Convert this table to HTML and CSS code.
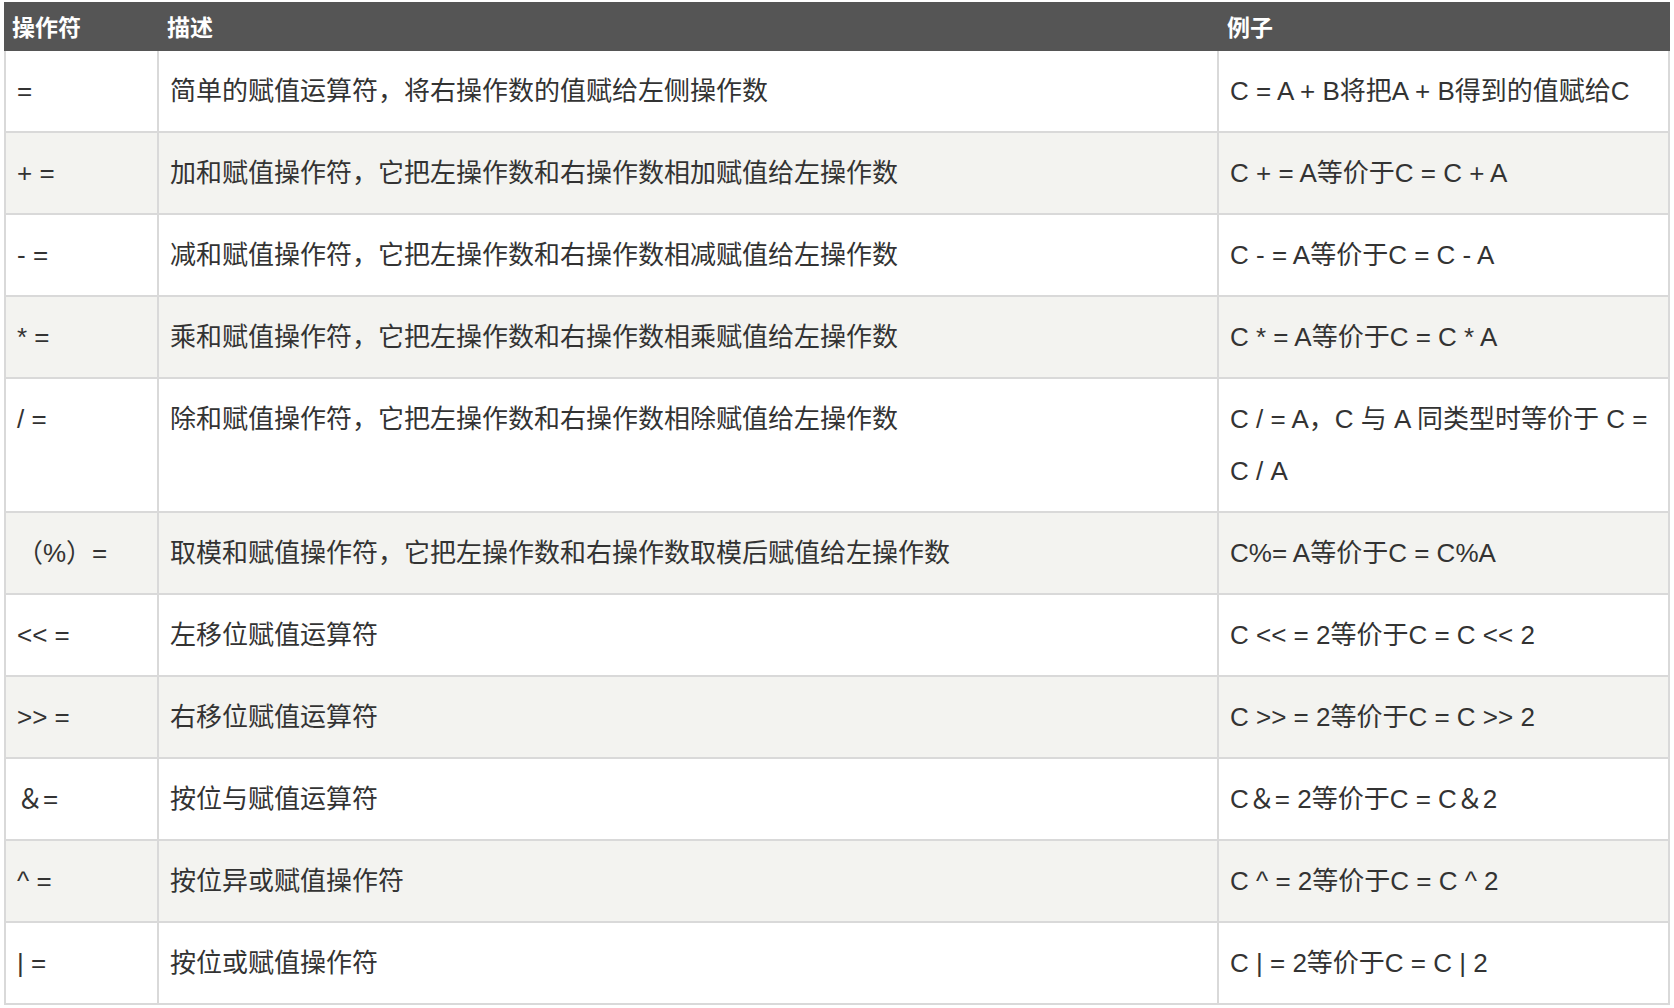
FILE: index.html
```html
<!DOCTYPE html>
<html lang="zh-CN">
<head>
<meta charset="utf-8">
<title>赋值运算符</title>
<link rel="stylesheet" href="styles.css">
</head>
<body>
<table class="ops">
  <colgroup>
    <col class="c-op">
    <col class="c-desc">
    <col class="c-ex">
  </colgroup>
  <thead>
    <tr><th>操作符</th><th>描述</th><th>例子</th></tr>
  </thead>
  <tbody>
    <tr><td>=</td><td>简单的赋值运算符，将右操作数的值赋给左侧操作数</td><td class="nowrap">C = A + B将把A + B得到的值赋给C</td></tr>
    <tr><td>+ =</td><td>加和赋值操作符，它把左操作数和右操作数相加赋值给左操作数</td><td>C + = A等价于C = C + A</td></tr>
    <tr><td>- =</td><td>减和赋值操作符，它把左操作数和右操作数相减赋值给左操作数</td><td>C - = A等价于C = C - A</td></tr>
    <tr><td>* =</td><td>乘和赋值操作符，它把左操作数和右操作数相乘赋值给左操作数</td><td>C * = A等价于C = C * A</td></tr>
    <tr><td>/ =</td><td>除和赋值操作符，它把左操作数和右操作数相除赋值给左操作数</td><td>C / = A，C 与 A 同类型时等价于 C = C&nbsp;/&nbsp;A</td></tr>
    <tr><td>（%）=</td><td>取模和赋值操作符，它把左操作数和右操作数取模后赋值给左操作数</td><td>C%= A等价于C = C%A</td></tr>
    <tr><td>&lt;&lt; =</td><td>左移位赋值运算符</td><td>C &lt;&lt; = 2等价于C = C &lt;&lt; 2</td></tr>
    <tr><td>&gt;&gt; =</td><td>右移位赋值运算符</td><td>C &gt;&gt; = 2等价于C = C &gt;&gt; 2</td></tr>
    <tr><td>＆=</td><td>按位与赋值运算符</td><td>C＆= 2等价于C = C＆2</td></tr>
    <tr><td>^ =</td><td>按位异或赋值操作符</td><td>C ^ = 2等价于C = C ^ 2</td></tr>
    <tr><td>| =</td><td>按位或赋值操作符</td><td>C | = 2等价于C = C | 2</td></tr>
  </tbody>
</table>
</body>
</html>
```

FILE: styles.css
```css
html, body {
  margin: 0;
  padding: 0;
  background: #ffffff;
}

body {
  font-family: "Liberation Sans", "Noto Sans CJK SC", sans-serif;
  color: #333333;
}

.ops {
  margin: 2px 0 0 4px;
  width: 1666px;
  table-layout: fixed;
  border-collapse: separate;
  border-spacing: 0;
}

.c-op { width: 155px; }
.c-desc { width: 1060px; }
.c-ex { width: 451px; }

.ops th {
  background: #555555;
  color: #ffffff;
  font-family: "Noto Sans CJK SC", sans-serif;
  font-weight: bold;
  font-size: 23px;
  line-height: 33px;
  height: 33px;
  padding: 8px 8px;
  text-align: left;
  border: 0;
}

.ops td {
  font-size: 26px;
  line-height: 52px;
  padding: 14px 11px;
  text-align: left;
  vertical-align: top;
  border-right: 2px solid #d9d9d9;
  border-bottom: 2px solid #d9d9d9;
}

.ops td:first-child {
  border-left: 2px solid #d9d9d9;
}

.ops td.nowrap {
  white-space: nowrap;
}

.ops tbody tr:nth-child(even) td {
  background: #f3f3f0;
}
```
